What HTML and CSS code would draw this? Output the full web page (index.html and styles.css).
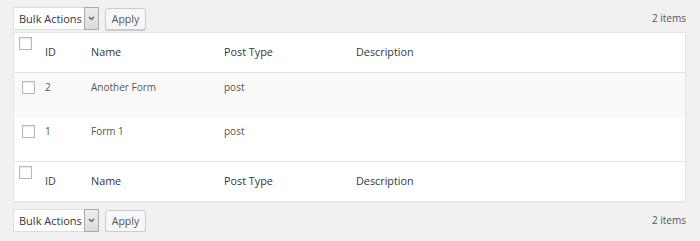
FILE: index.html
```html
<!DOCTYPE html>
<html lang="en">
<head>
    <meta charset="UTF-8">
    <title>Forms</title>
    <link rel="stylesheet" href="styles.css">
</head>
<body>
    <div class="wrap">
        <div class="tablenav">
            <div class="bulk-select">
                <span class="bulk-label">Bulk Actions</span>
                <span class="bulk-arrow">
                    <svg width="7" height="5" viewBox="0 0 7 5"><polyline points="1,1 3.5,3.5 6,1" fill="none" stroke="#555" stroke-width="1.2"/></svg>
                </span>
            </div>
            <button class="button">Apply</button>
            <span class="count">2 items</span>
        </div>

        <div class="list-table">
            <div class="row head">
                <div class="cell check"><span class="checkbox"></span></div>
                <div class="cell">ID</div>
                <div class="cell">Name</div>
                <div class="cell">Post Type</div>
                <div class="cell">Description</div>
            </div>
            <div class="row item alt">
                <div class="cell check"><span class="checkbox"></span></div>
                <div class="cell">2</div>
                <div class="cell">Another Form</div>
                <div class="cell">post</div>
                <div class="cell"></div>
            </div>
            <div class="row item">
                <div class="cell check"><span class="checkbox"></span></div>
                <div class="cell">1</div>
                <div class="cell">Form 1</div>
                <div class="cell">post</div>
                <div class="cell"></div>
            </div>
            <div class="row head foot">
                <div class="cell check"><span class="checkbox"></span></div>
                <div class="cell">ID</div>
                <div class="cell">Name</div>
                <div class="cell">Post Type</div>
                <div class="cell">Description</div>
            </div>
        </div>

        <div class="tablenav bottom">
            <div class="bulk-select">
                <span class="bulk-label">Bulk Actions</span>
                <span class="bulk-arrow">
                    <svg width="7" height="5" viewBox="0 0 7 5"><polyline points="1,1 3.5,3.5 6,1" fill="none" stroke="#555" stroke-width="1.2"/></svg>
                </span>
            </div>
            <button class="button">Apply</button>
            <span class="count">2 items</span>
        </div>
    </div>
</body>
</html>
```

FILE: styles.css
```css
body {
    margin: 0;
    background: #f1f1f1;
    font-family: "Open Sans", "Liberation Sans", sans-serif;
    font-size: 10px;
    color: #555;
}
.wrap {
    padding: 7px 14px 0 13px;
}
.tablenav {
    display: flex;
    align-items: flex-start;
    height: 23px;
    margin-bottom: 2px;
}
.tablenav.bottom {
    margin-top: 7px;
    margin-bottom: 0;
}
.bulk-select {
    display: flex;
    width: 86px;
    height: 23px;
    box-sizing: border-box;
    border: 1px solid #ddd;
    background: #fff;
}
.bulk-label {
    flex: 1;
    padding-left: 5px;
    line-height: 21px;
    font-size: 11px;
    color: #32373c;
}
.bulk-arrow {
    display: flex;
    align-items: center;
    justify-content: center;
    width: 13px;
    margin: -1px -1px -1px 0;
    border: 1px solid #aaa;
    background: linear-gradient(#ececec, #dcdcdc);
}
.button {
    margin: 1px 0 0 6px;
    width: 41px;
    height: 22px;
    padding: 0;
    border: 1px solid #ccc;
    border-radius: 3px;
    background: #f7f7f7;
    box-shadow: 0 1px 0 #ccc;
    font-family: inherit;
    font-size: 10.5px;
    color: #555;
}
.count {
    margin-left: auto;
    line-height: 23px;
    font-size: 10px;
    color: #555;
}
.list-table {
    border: 1px solid #e5e5e5;
    background: #fff;
    box-shadow: 0 1px 1px rgba(0, 0, 0, 0.04);
}
.row {
    display: grid;
    grid-template-columns: 31px 46px 133px 132px 1fr;
}
.row.head {
    height: 39px;
    border-bottom: 1px solid #e1e1e1;
    font-size: 10.8px;
    color: #32373c;
}
.row.head .cell {
    padding-top: 11px;
}
.row.head .check {
    padding: 4px 0 0 5px;
}
.row.foot {
    border-bottom: none;
    border-top: 1px solid #e1e1e1;
}
.row.item {
    height: 44px;
}
.row.item .cell {
    padding-top: 6px;
}
.row.item .check {
    padding: 8px 0 0 8px;
}
.row.alt {
    background: #f9f9f9;
}
.cell {
    line-height: 16px;
}
.checkbox {
    display: block;
    width: 11px;
    height: 11px;
    border: 1px solid #b4b9be;
    background: #fff;
    box-shadow: inset 0 1px 2px rgba(0, 0, 0, 0.1);
}
```
